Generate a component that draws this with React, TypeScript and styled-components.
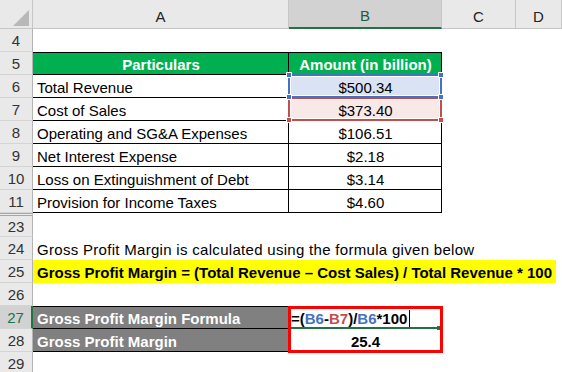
import React from 'react';
import styled, { createGlobalStyle, css } from 'styled-components';

const GlobalStyle = createGlobalStyle`
  html, body { margin: 0; padding: 0; background: #fff; }
  body { font-family: "Liberation Sans", Arial, sans-serif; }
`;

const COLS = '33px 256px 153px 74px 46px';
const GREEN = '#217346';

const Sheet = styled.div`
  width: 562px;
  height: 372px;
  overflow: hidden;
  background: #fff;
  font-size: 15px;
  color: #000;
`;

const HeaderRow = styled.div`
  display: grid;
  grid-template-columns: ${COLS};
  height: 29px;
  background: #e9e9e9;
  border-bottom: 1px solid #c6c6c6;
  box-sizing: border-box;
`;

const Corner = styled.div`
  border-right: 1px solid #c6c6c6;
  display: flex;
  align-items: flex-end;
  justify-content: flex-end;
  padding: 0 2px 1px 0;
`;

const ColHead = styled.div<{ $selected?: boolean }>`
  display: flex;
  align-items: center;
  justify-content: center;
  padding-top: 5px;
  box-sizing: border-box;
  border-right: 1px solid #c6c6c6;
  color: #222;
  ${(p) =>
    p.$selected &&
    css`
      background: #d2d2d2;
      color: #1e5b3c;
      border-bottom: 2px solid ${GREEN};
      margin-bottom: -1px;
      padding-top: 4px;
    `}
`;

const Row = styled.div<{ $h?: number }>`
  display: grid;
  grid-template-columns: ${COLS};
  height: ${(p) => p.$h ?? 23}px;
`;

const RowHead = styled.div<{ $selected?: boolean; $gap?: boolean }>`
  display: flex;
  align-items: center;
  justify-content: center;
  box-sizing: border-box;
  background: #e9e9e9;
  color: #333;
  border-bottom: 1px solid #d4d4d4;
  border-right: 1px solid #b4b4b4;
  ${(p) =>
    p.$gap &&
    css`
      border-top: 3px double #a8a8a8;
    `}
  ${(p) =>
    p.$selected &&
    css`
      background: #d2d2d2;
      color: ${GREEN};
      border-right: 2px solid ${GREEN};
    `}
`;

type CellProps = {
  $bg?: string;
  $bold?: boolean;
  $center?: boolean;
  $color?: string;
  $boxed?: boolean;
  $top?: boolean;
  $span?: number;
  $trim?: number;
  $spread?: number;
};

const Cell = styled.div<CellProps>`
  position: relative;
  display: flex;
  align-items: center;
  justify-content: ${(p) => (p.$center ? 'center' : 'flex-start')};
  box-sizing: border-box;
  padding: 2px 3px 0 4px;
  white-space: nowrap;
  background: ${(p) => p.$bg ?? 'transparent'};
  color: ${(p) => p.$color ?? '#000'};
  font-weight: ${(p) => (p.$bold ? 700 : 400)};
  letter-spacing: ${(p) => p.$spread ?? 0}px;
  ${(p) => p.$span && css`grid-column: span ${p.$span};`}
  ${(p) => p.$trim && css`margin-right: ${p.$trim}px;`}
  ${(p) =>
    p.$boxed &&
    css`
      border-right: 1px solid #000;
      border-bottom: 1px solid #000;
    `}
  ${(p) => p.$top && css`border-top: 1px solid #000;`}
`;

const RefFrame = styled.div<{ $c: string; $z: number }>`
  position: absolute;
  left: -1px;
  top: -1px;
  right: -1px;
  bottom: -1px;
  border: 2px solid ${(p) => p.$c};
  box-shadow: inset 0 0 0 1px #fff;
  z-index: ${(p) => p.$z};
  pointer-events: none;
`;

const Handle = styled.span<{ $c: string; $v: 'top' | 'bottom'; $h: 'left' | 'right' }>`
  position: absolute;
  width: 4px;
  height: 4px;
  background: ${(p) => p.$c};
  border: 1px solid #fff;
  ${(p) => p.$v}: -4px;
  ${(p) => p.$h}: -4px;
`;

const RedBox = styled.div`
  position: absolute;
  left: -1px;
  top: -1px;
  width: 155px;
  height: 47px;
  box-sizing: border-box;
  border: 3px solid #ff0000;
  z-index: 4;
  pointer-events: none;
`;

const ActiveLine = styled.div`
  position: absolute;
  left: 2px;
  right: 2px;
  bottom: -1px;
  height: 2px;
  background: ${GREEN};
  z-index: 3;
  &::after {
    content: '';
    position: absolute;
    right: -1px;
    top: -1px;
    width: 3px;
    height: 4px;
    background: ${GREEN};
  }
`;

const Ref = styled.span<{ $c: string }>`
  color: ${(p) => p.$c};
`;

const Caret = styled.span`
  display: inline-block;
  width: 1px;
  height: 18px;
  background: #000;
  margin-left: 2px;
  align-self: center;
`;

const Formula = styled.span`
  display: inline-flex;
  align-items: center;
  margin-left: -2px;
`;

const BLUE = '#4472c4';
const RED = '#c0504d';

const data = [
  { n: 6, label: 'Total Revenue', value: '$500.34', ref: 'blue' },
  { n: 7, label: 'Cost of Sales', value: '$373.40', ref: 'red' },
  { n: 8, label: 'Operating and SG&A Expenses', value: '$106.51' },
  { n: 9, label: 'Net Interest Expense', value: '$2.18' },
  { n: 10, label: 'Loss on Extinguishment of Debt', value: '$3.14' },
  { n: 11, label: 'Provision for Income Taxes', value: '$4.60' },
];

const CornerTriangle = () => (
  <svg width="17" height="17" viewBox="0 0 17 17">
    <polygon points="0,16 16,0 16,16" fill="#b8b8b8" />
  </svg>
);

const Empty = () => (
  <>
    <Cell />
    <Cell />
    <Cell />
    <Cell />
  </>
);

export default function App() {
  return (
    <>
      <GlobalStyle />
      <Sheet>
        <HeaderRow>
          <Corner>
            <CornerTriangle />
          </Corner>
          <ColHead>A</ColHead>
          <ColHead $selected>B</ColHead>
          <ColHead>C</ColHead>
          <ColHead>D</ColHead>
        </HeaderRow>

        <Row>
          <RowHead>4</RowHead>
          <Empty />
        </Row>

        <Row>
          <RowHead>5</RowHead>
          <Cell $boxed $top $bg="#00b050" $color="#fff" $bold $center>
            Particulars
          </Cell>
          <Cell $boxed $top $bg="#00b050" $color="#fff" $bold $center>
            Amount (in billion)
          </Cell>
          <Cell />
          <Cell />
        </Row>

        {data.map((d) => (
          <Row key={d.n}>
            <RowHead>{d.n}</RowHead>
            <Cell $boxed>{d.label}</Cell>
            <Cell
              $boxed
              $center
              $bg={d.ref === 'blue' ? '#dae3f3' : d.ref === 'red' ? '#f8e8e8' : undefined}
            >
              {d.value}
              {d.ref && (
                <RefFrame $c={d.ref === 'blue' ? BLUE : RED} $z={d.ref === 'blue' ? 3 : 2}>
                  {d.ref === 'blue' && (
                    <>
                      <Handle $c={BLUE} $v="top" $h="left" />
                      <Handle $c={BLUE} $v="top" $h="right" />
                    </>
                  )}
                  <Handle $c={d.ref === 'blue' ? BLUE : RED} $v="bottom" $h="left" />
                  <Handle $c={d.ref === 'blue' ? BLUE : RED} $v="bottom" $h="right" />
                </RefFrame>
              )}
            </Cell>
            <Cell />
            <Cell />
          </Row>
        ))}

        <Row $h={24}>
          <RowHead $gap>23</RowHead>
          <Empty />
        </Row>

        <Row>
          <RowHead>24</RowHead>
          <Cell $span={4} $spread={0.3}>
            Gross Profit Margin is calculated using the formula given below
          </Cell>
        </Row>

        <Row>
          <RowHead>25</RowHead>
          <Cell $span={4} $trim={6} $bg="#ffff00" $bold>
            Gross Profit Margin = (Total Revenue – Cost Sales) / Total Revenue * 100
          </Cell>
        </Row>

        <Row>
          <RowHead>26</RowHead>
          <Empty />
        </Row>

        <Row>
          <RowHead $selected>27</RowHead>
          <Cell $boxed $top $bg="#808080" $color="#fff" $bold>
            Gross Profit Margin Formula
          </Cell>
          <Cell $boxed $top $bold>
            <Formula>
              =(<Ref $c={BLUE}>B6</Ref>-<Ref $c={RED}>B7</Ref>)/<Ref $c={BLUE}>B6</Ref>*100
              <Caret />
            </Formula>
            <ActiveLine />
            <RedBox />
          </Cell>
          <Cell />
          <Cell />
        </Row>

        <Row>
          <RowHead>28</RowHead>
          <Cell $boxed $bg="#808080" $color="#fff" $bold>
            Gross Profit Margin
          </Cell>
          <Cell $boxed $bold $center>
            25.4
          </Cell>
          <Cell />
          <Cell />
        </Row>

        <Row>
          <RowHead>29</RowHead>
          <Empty />
        </Row>
      </Sheet>
    </>
  );
}
